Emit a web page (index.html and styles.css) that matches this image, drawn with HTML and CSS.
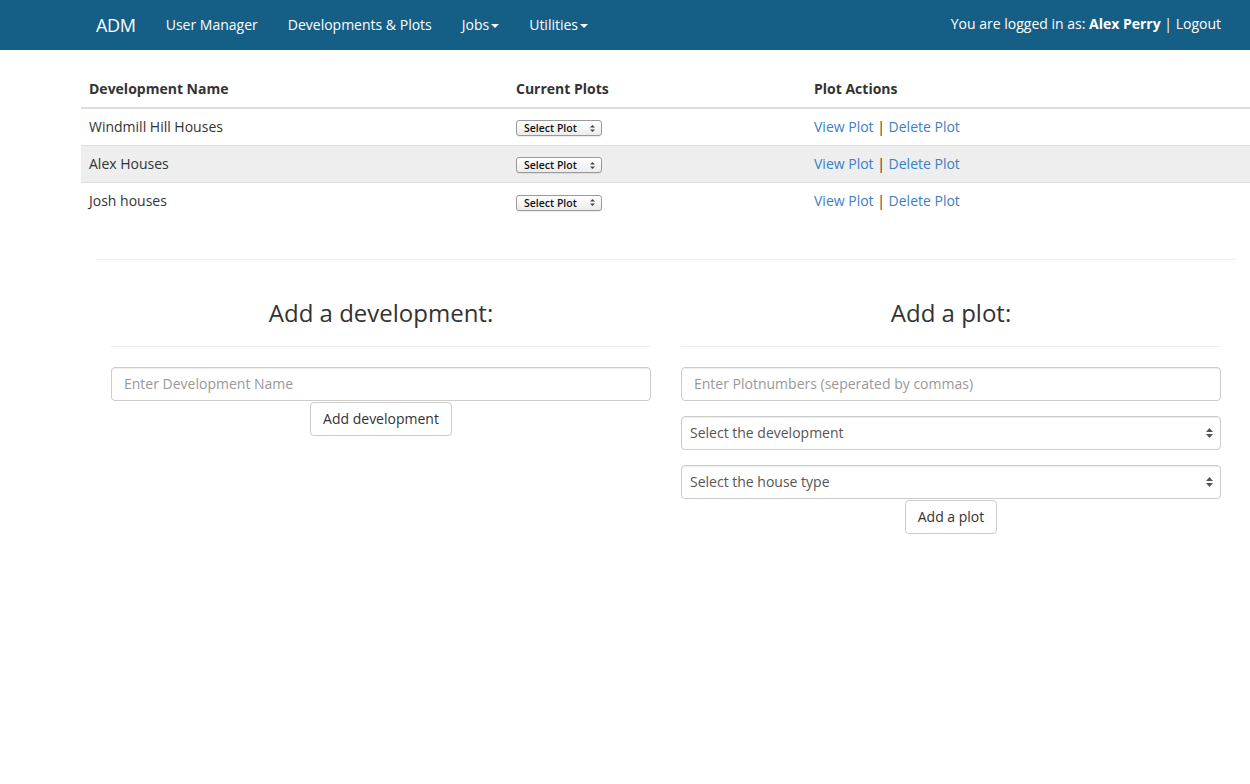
FILE: index.html
```html
<!DOCTYPE html>
<html>
<head>
<meta charset="utf-8">
<title>ADM</title>
<link rel="stylesheet" href="styles.css">
</head>
<body>
<nav class="navbar">
  <div class="nav-inner">
    <a class="brand" href="#">ADM</a>
    <ul class="nav-links">
      <li><a href="#">User Manager</a></li>
      <li><a href="#">Developments &amp; Plots</a></li>
      <li><a href="#">Jobs<span class="caret"></span></a></li>
      <li><a href="#">Utilities<span class="caret"></span></a></li>
    </ul>
    <div class="nav-right">You are logged in as: <b>Alex Perry</b> | <a href="#">Logout</a></div>
  </div>
</nav>

<div class="container">
  <table class="dev-table">
    <thead>
      <tr><th class="c1">Development Name</th><th class="c2">Current Plots</th><th>Plot Actions</th></tr>
    </thead>
    <tbody>
      <tr>
        <td>Windmill Hill Houses</td>
        <td><span class="mini-select">Select Plot<svg class="mini-arrows" width="5" height="7" viewBox="0 0 5 7"><path d="M2.5 0L5 2.6H0z M2.5 7L0 4.4h5z" fill="#444"/></svg></span></td>
        <td><a href="#">View Plot</a> | <a href="#">Delete Plot</a></td>
      </tr>
      <tr class="striped">
        <td>Alex Houses</td>
        <td><span class="mini-select">Select Plot<svg class="mini-arrows" width="5" height="7" viewBox="0 0 5 7"><path d="M2.5 0L5 2.6H0z M2.5 7L0 4.4h5z" fill="#444"/></svg></span></td>
        <td><a href="#">View Plot</a> | <a href="#">Delete Plot</a></td>
      </tr>
      <tr>
        <td>Josh houses</td>
        <td><span class="mini-select">Select Plot<svg class="mini-arrows" width="5" height="7" viewBox="0 0 5 7"><path d="M2.5 0L5 2.6H0z M2.5 7L0 4.4h5z" fill="#444"/></svg></span></td>
        <td><a href="#">View Plot</a> | <a href="#">Delete Plot</a></td>
      </tr>
    </tbody>
  </table>

  <div class="padded">
    <hr class="sep">
    <div class="row">
      <div class="col">
        <h3>Add a development:</h3>
        <hr class="under">
        <input class="field" type="text" placeholder="Enter Development Name">
        <div class="center"><button class="btn">Add development</button></div>
      </div>
      <div class="col">
        <h3>Add a plot:</h3>
        <hr class="under">
        <div class="group"><input class="field" type="text" placeholder="Enter Plotnumbers (seperated by commas)"></div>
        <div class="group">
          <div class="select-box">Select the development<svg class="sel-arrows" width="7" height="12" viewBox="0 0 7 12"><path d="M3.5 1L7 5H0z M3.5 11L0 7h7z" fill="#555"/></svg></div>
        </div>
        <div class="select-box">Select the house type<svg class="sel-arrows" width="7" height="12" viewBox="0 0 7 12"><path d="M3.5 1L7 5H0z M3.5 11L0 7h7z" fill="#555"/></svg></div>
        <div class="center"><button class="btn">Add a plot</button></div>
      </div>
    </div>
  </div>
</div>
</body>
</html>
```

FILE: styles.css
```css
* { box-sizing: border-box; }
html, body { margin: 0; padding: 0; }
body {
  font-family: "Open Sans", "Liberation Sans", sans-serif;
  font-size: 14px;
  line-height: 20px;
  color: #333;
  background: #fff;
}
a { color: #3a80c4; text-decoration: none; }

.navbar {
  background: #155e86;
  height: 50px;
  margin-bottom: 20px;
}
.nav-inner {
  margin-left: 81px;
  width: 1170px;
  padding: 0 15px;
  height: 50px;
  display: flex;
  align-items: center;
}
.brand {
  color: #fff;
  font-size: 18px;
  padding: 15px 15px 15px 0;
  line-height: 20px;
  letter-spacing: -0.3px;
}
.nav-links {
  list-style: none;
  margin: 0;
  padding: 0;
  display: flex;
  flex: 1;
}
.nav-links a {
  display: block;
  color: #fff;
  padding: 15px;
  line-height: 20px;
}
.caret {
  display: inline-block;
  width: 0;
  height: 0;
  margin-left: 2px;
  vertical-align: middle;
  border-top: 4px solid #fff;
  border-left: 4px solid transparent;
  border-right: 4px solid transparent;
}
.nav-right {
  color: #fff;
  padding-right: 15px;
  margin-top: -2px;
}
.nav-right a { color: #fff; }
.nav-right b { font-weight: 700; }

.container {
  margin-left: 81px;
  width: 1170px;
}
.dev-table {
  width: 1170px;
  border-collapse: collapse;
  margin-bottom: 20px;
}
.dev-table th {
  text-align: left;
  font-weight: 700;
  padding: 8px;
  border-bottom: 2px solid #ddd;
  line-height: 20px;
}
.dev-table th.c1 { width: 427px; }
.dev-table th.c2 { width: 298px; }
.dev-table td {
  padding: 8px;
  border-top: 1px solid #ddd;
  line-height: 20px;
  height: 37px;
}
.dev-table thead tr th { height: 38px; }
.dev-table tr.striped td { background: #eeeeee; }

.mini-select {
  display: inline-flex;
  align-items: center;
  justify-content: space-between;
  width: 86px;
  height: 16px;
  padding: 0 6px 0 7px;
  border: 1px solid #9a9a9a;
  border-radius: 3px;
  background: linear-gradient(#ffffff, #ececec);
  font-family: "Open Sans", "Liberation Sans", sans-serif;
  font-size: 10.5px;
  font-weight: 600;
  color: #111;
  line-height: 14px;
  vertical-align: middle;
  box-shadow: 0 1px 1px rgba(0,0,0,0.08);
}
.mini-arrows { display: block; }

.padded { padding: 0 15px; }
hr {
  border: 0;
  border-top: 1px solid #eee;
  margin: 20px 0;
}
hr.sep { margin-top: 39px; }
.row {
  display: flex;
}
.col {
  width: 50%;
  padding: 0 15px;
}
.col h3 {
  font-size: 24px;
  font-weight: 500;
  line-height: 1.1;
  margin: 20px 0 10px;
  text-align: center;
}
.col hr.under { margin: 20px 0 20px; }

.field {
  display: block;
  width: 100%;
  height: 34px;
  padding: 6px 12px;
  font-family: inherit;
  font-size: 14px;
  color: #555;
  border: 1px solid #ccc;
  border-radius: 4px;
  box-shadow: inset 0 1px 1px rgba(0,0,0,0.075);
  outline: none;
}
.field::placeholder { color: #999; }
.group { margin-bottom: 15px; }
.select-box {
  display: flex;
  align-items: center;
  justify-content: space-between;
  height: 34px;
  padding: 0 7px 0 8px;
  border: 1px solid #ccc;
  border-radius: 4px;
  color: #555;
  font-size: 14px;
  box-shadow: inset 0 1px 1px rgba(0,0,0,0.075);
  background: #fff;
}
.sel-arrows { display: block; }
.center { text-align: center; }
.btn {
  margin-top: 1px;
  height: 34px;
  padding: 6px 12px;
  font-family: inherit;
  font-size: 14px;
  line-height: 20px;
  color: #333;
  background: #fff;
  border: 1px solid #ccc;
  border-radius: 4px;
}
```
